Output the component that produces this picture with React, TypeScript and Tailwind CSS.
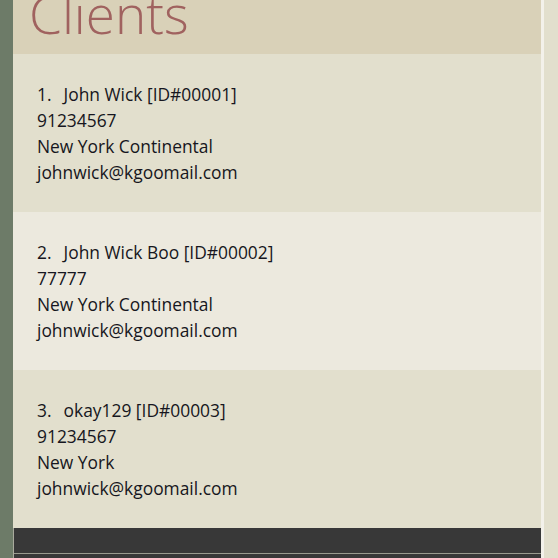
import React from "react"

const clients = [
  { id: "00001", name: "John Wick", phone: "91234567", address: "New York Continental", email: "johnwick@kgoomail.com" },
  { id: "00002", name: "John Wick Boo", phone: "77777", address: "New York Continental", email: "johnwick@kgoomail.com" },
  { id: "00003", name: "okay129", phone: "91234567", address: "New York", email: "johnwick@kgoomail.com" },
]

export default function App() {
  return (
    <div
      className="flex w-[558px] h-[558px] overflow-hidden bg-[#e2dfcd]"
      style={{ fontFamily: '"Open Sans", "Segoe UI", sans-serif' }}
    >
      <div className="w-[13px] shrink-0 bg-[#6d7b68]" />
      <div className="flex w-[528px] shrink-0 flex-col">
        {/* Header */}
        <div className="h-[54px] shrink-0 overflow-hidden bg-[#d9d1b8] pl-[16px]">
          <div className="mt-[-22px] text-[53px] font-light leading-[72px] text-[#a0625f]">Clients</div>
        </div>

        {/* Client list */}
        {clients.map((c, i) => (
          <div
            key={c.id}
            className={`h-[158px] shrink-0 pl-[24px] pt-[27px] text-[17.4px] leading-[26px] text-[#161620] ${
              i % 2 === 1 ? "bg-[#ece9de]" : "bg-[#e2dfcd]"
            }`}
          >
            <div>
              {i + 1}.<span className="inline-block w-[12px]" />
              {c.name} [ID#{c.id}]
            </div>
            <div>{c.phone}</div>
            <div>{c.address}</div>
            <div>{c.email}</div>
          </div>
        ))}

        {/* Footer bar */}
        <div className="flex-1 border-l border-[#a9aa9d] bg-[#383838]">
          <div className="h-[25px]" />
          <div className="h-[1px] bg-[#9a9b8f]" />
        </div>
      </div>
      <div className="w-[3px] shrink-0 bg-[#f3f1ea]" />
      <div className="flex-1 bg-[#e2dfcd]" />
    </div>
  )
}
